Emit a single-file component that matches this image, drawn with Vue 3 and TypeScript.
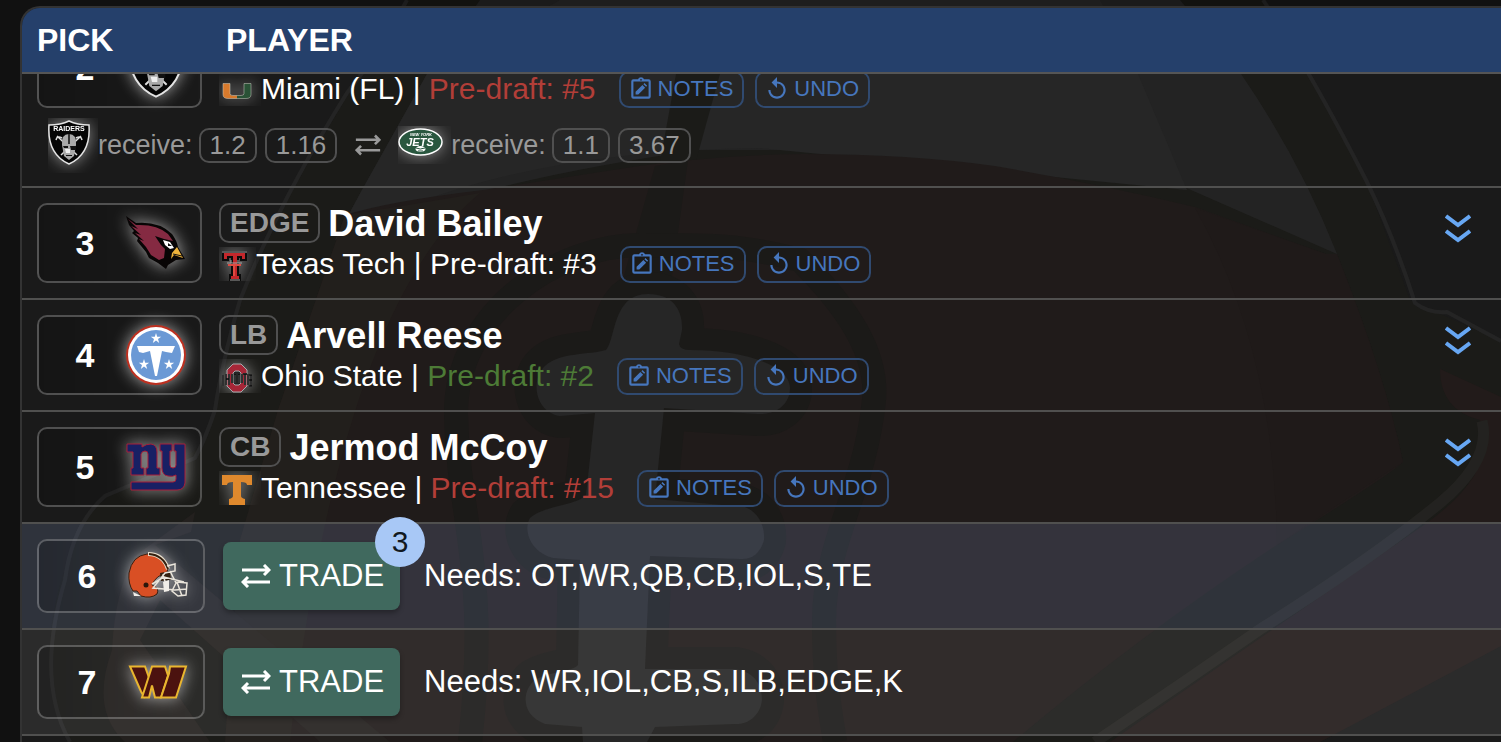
<script setup lang="ts">
import { onMounted, ref } from 'vue'

interface Label {
  text: string
  x: number
  y: number
  size: number
  fill: string
}

interface TradeSide {
  team: string
  width: number
  height: number
  gets: string[]
  labels: Label[]
}

interface Drafted {
  pick: number
  team: string
  pos: string
  name: string
  school: string
  schoolLogo: string
  logoWidth: number
  rank: number
  tone: 'even' | 'low' | 'high'
  trade?: TradeSide[]
}

interface Upcoming {
  pick: number
  team: string
  needs: string
  offers: number
  current: boolean
}

const drafted: Drafted[] = [
  {
    pick: 2, team: 'raiders', pos: '', name: '', school: 'Miami (FL)', schoolLogo: 'miami', logoWidth: 30, rank: 5, tone: 'low',
    trade: [
      { team: 'raiders', width: 42, height: 45, gets: ['1.2', '1.16'], labels: [{ text: 'RAIDERS', x: 21, y: 11, size: 7, fill: '#fff' }] },
      {
        team: 'jets', width: 45, height: 28, gets: ['1.1', '3.67'],
        labels: [
          { text: 'NEW YORK', x: 23, y: 8, size: 4, fill: '#fff' },
          { text: 'JETS', x: 22, y: 18, size: 11, fill: '#fff' },
        ],
      },
    ],
  },
  { pick: 3, team: 'cardinals', pos: 'EDGE', name: 'David Bailey', school: 'Texas Tech', schoolLogo: 'texastech', logoWidth: 25, rank: 3, tone: 'even' },
  { pick: 4, team: 'titans', pos: 'LB', name: 'Arvell Reese', school: 'Ohio State', schoolLogo: 'ohiostate', logoWidth: 30, rank: 2, tone: 'high' },
  { pick: 5, team: 'giants', pos: 'CB', name: 'Jermod McCoy', school: 'Tennessee', schoolLogo: 'tennessee', logoWidth: 30, rank: 15, tone: 'low' },
]

const upcoming: Upcoming[] = [
  { pick: 6, team: 'browns', needs: 'OT,WR,QB,CB,IOL,S,TE', offers: 3, current: true },
  { pick: 7, team: 'commanders', needs: 'WR,IOL,CB,S,ILB,EDGE,K', offers: 0, current: false },
]

const board = ref<HTMLElement | null>(null)

onMounted(() => {
  if (board.value) board.value.scrollTop = 61
})
</script>

<template>
  <main class="page">
    <svg class="defs" aria-hidden="true">
      <linearGradient id="miamiSplit"><stop offset="50%" stop-color="#d87a2c" /><stop offset="50%" stop-color="#2a5236" /></linearGradient>
      <symbol id="cardinals" viewBox="0 0 60 54">
        <path d="M0 0L10 7Q33 5 46 18Q51 25 52 31L59 43L50 44L42 49L40 53L32 47L23 42L20 36L11 25L12 22L6 17L8 15L3 9Z" fill="#080505" />
        <path d="M2 3L10 9Q31 8 42 18L47 25L38 23L29 20L35 29L39 33L38 42L33 44L25 39L20 31L13 23L18 25L9 17L15 19L5 10L12 13Z" fill="#852a42" />
        <path d="M37 24L44 26L48 32L44 33L39 29Z" fill="#fff" /><path d="M42 27L46 30L42 30Z" fill="#111" />
        <path d="M51 31L57 42L48 39L45 43L46 37Z" fill="#eeb33b" /><path d="M47 38L56 40" stroke="#111" />
      </symbol>
      <symbol id="titans" viewBox="0 0 60 60">
        <circle cx="30" cy="30" r="30" fill="#bd3020" /><circle cx="30" cy="30" r="28" fill="#fff" /><circle cx="30" cy="30" r="25" fill="#6b99d5" />
        <path d="M11 21H49L46 28L40 27L36 26L31 51H29L24 26L17 28L13 27Z" fill="#fff" />
        <path id="titanStar" d="M30 8l1.200 3.700h4l-3.200 2.400 1.200 3.900-3.200-2.400-3.200 2.400 1.200-3.900-3.200-2.400h4z" fill="#fff" />
        <use href="#titanStar" x="-12" y="26" /><use href="#titanStar" x="13" y="26" />
      </symbol>
      <symbol id="giants" viewBox="0 0 60 48">
        <g fill="#182064" stroke="#a81d38" stroke-width="1">
          <path d="M1 1H16V4Q20 1 25 1Q31 2 31 9V25H34V32H20V25H22V11Q22 8 19 8Q16 8 15 11V25H18V32H5V25H7V9H1Z" />
          <path d="M34 1H46V8H44V22Q44 25 47 25Q50 25 50 22V8H48V1H59V40Q58 47 51 47H5V39H47Q50 39 50 36V32Q47 34 42 33Q36 32 36 25V8H34Z" />
        </g>
      </symbol>
      <symbol id="browns" viewBox="0 0 60 46">
        <path d="M5 38Q0 31 1 20Q4 3 19 1Q34 0 40 14L39 20Q28 22 24 32Q32 35 29 41Q23 46 13 43L9 38Z" fill="#d94f24" stroke="#3b2010" stroke-width="1" />
        <path d="M20 1Q35 1 40 16" fill="none" stroke="#e9dfcd" stroke-width="4" />
        <path d="M21 1Q35 2 40 16" fill="none" stroke="#35200f" stroke-width="2" />
        <path d="M32 20L42 18L43 27L33 28Z" fill="#32200f" />
        <circle cx="18" cy="32" r="2.500" fill="#2b170b" />
        <path d="M39 13L47 11V18L37 20L25 35L48 37M24 31L36 24L56 29M35 21L39 36M42 18L48 30L44 38L50 43L58 42L59 30L49 29L54 43M47 37L59 36" fill="none" stroke="#e9e4da" stroke-width="1.500" />
        <path d="M35 29L41 27V38L36 39ZM5 39L13 43L6 43Z" fill="#f1eee8" />
      </symbol>
      <symbol id="commanders" viewBox="0 0 60 33">
        <g fill="#4b120f" stroke="#e9b62f" stroke-width="2">
          <path d="M2 1H17L22 15L16 31L13 26Z" /><path d="M24 1H37L40 10L33 32H27L24 20L21 32H14Z" /><path d="M42 1H58L48 32H33L41 8Z" />
        </g>
      </symbol>
      <symbol id="raiders" viewBox="0 0 42 45">
        <path d="M21 1Q29 5 41 5Q43 34 21 44Q-1 34 1 5Q13 5 21 1Z" fill="#050505" stroke="#e4e4e4" stroke-width="1.500" />
        <path d="M9 16L29 35M33 16L13 35M8 20Q9 15 14 18M34 20Q33 15 28 18" fill="none" stroke="#ddd" stroke-width="1.500" />
        <path d="M14 25Q13 14 21 14Q29 14 28 25L26 36L21 40L16 36Z" fill="#a9a9a9" />
        <path d="M21 14V24" stroke="#333" stroke-width="2" />
        <path d="M15 26H20V28H16ZM22 26H28V30H23ZM18 35H24V36H18Z" fill="#111" />
        <path d="M17 29H22V33H18Z" fill="#eee" />
      </symbol>
      <symbol id="jets" viewBox="0 0 45 28">
        <ellipse cx="22.500" cy="14" rx="21.500" ry="13" fill="#29573f" stroke="#fff" stroke-width="1.500" />
        <ellipse cx="22.500" cy="21" rx="5" ry="3" fill="#fff" /><path d="M18 20Q22 22 27 20M20 23H25" fill="none" stroke="#29573f" />
      </symbol>
      <symbol id="miami" viewBox="0 0 30 17">
        <path d="M1 1H8V11Q8 13 11 13H19Q22 13 22 11V1H29V12Q29 16 24 16H6Q1 16 1 12Z" fill="url(#miamiSplit)" stroke="#cfd0c4" stroke-width="0.500" />
      </symbol>
      <symbol id="texastech" viewBox="0 0 25 30">
        <path d="M1 1H24V9H19V6H16V24H18V29H8V24H10V6H6V9H1Z" fill="#c3272b" stroke="#0b0b0b" stroke-width="2" />
        <path d="M0 1H25M5 12H20M9 12V9M16 12V9M8 29H18" stroke="#a5a5a5" stroke-width="1" fill="none" />
        <path d="M6 14H19M12 14V25" stroke="#df4a41" stroke-width="2" />
      </symbol>
      <symbol id="ohiostate" viewBox="0 0 30 30">
        <path d="M11 1H19L25 7V23L19 29H11L5 23V7Z" fill="#a62637" stroke="#a9abae" stroke-width="1" />
        <path d="M13 8H17L19 10V20L17 22H13L11 20V10Z" fill="#242424" stroke="#a9abae" stroke-width="1" />
        <path d="M1 12V23M4 11V22M7 11V22M4 16H7M10 11V20M13 11V20M17 11V20M20 11V20M23 11V22M26 11V22M29 12V23M12 11H18M21 11H25M27 12H30M27 17H30M27 23H30" fill="none" stroke="#777" stroke-width="2" />
        <path d="M1 12V23M4 11V22M7 11V22M4 16H7M10 11V20M13 11V20M17 11V20M20 11V20M23 11V22M26 11V22M29 12V23M12 11H18M21 11H25M27 12H30M27 17H30M27 23H30" fill="none" stroke="#0b0b0b" stroke-width="1.300" />
      </symbol>
      <symbol id="tennessee" viewBox="0 0 30 30">
        <path d="M0 0H30V10H25Q25 7 19 7V21Q19 23 23 24V30H7V24Q11 23 11 21V7Q5 7 5 10H0Z" fill="#df892d" />
      </symbol>
      <symbol id="swap" viewBox="0 0 30 24">
        <path d="M1 6H28M23 1L28 6L23 11M29 18H2M7 13L2 18L7 23" fill="none" stroke="currentColor" stroke-width="3" />
      </symbol>
      <symbol id="notes" viewBox="0 0 24 24">
        <path d="M19 3h-4.200a3 3 0 0 0-5.600 0H5a2 2 0 0 0-2 2v14a2 2 0 0 0 2 2h14a2 2 0 0 0 2-2V5a2 2 0 0 0-2-2zm0 16H5V5h14zM12 2.700a.8.8 0 1 1 0 1.600.8.8 0 0 1 0-1.600z" fill="currentColor" fill-rule="evenodd" />
        <path d="M7 17v-2.500l6.300-6.200 2.500 2.500L9.500 17zM14.200 7.500l1-1 2.500 2.500-1 1z" fill="currentColor" />
      </symbol>
      <symbol id="undo" viewBox="0 0 24 24">
        <path d="M12 5V1L7 6l5 5V7c3.310 0 6 2.690 6 6s-2.690 6-6 6-6-2.690-6-6H4c0 4.420 3.580 8 8 8s8-3.580 8-8-3.580-8-8-8z" fill="currentColor" />
      </symbol>
    </svg>

    <svg class="backdrop" viewBox="0 0 1501 742" preserveAspectRatio="xMinYMin slice" aria-hidden="true">
      <path d="M407 0C365 65 275 210 240 300C228 335 219 390 210 430C200 470 110 470 80 530C48 600 35 690 70 742H1320L1501 646V341L1427 308L1410 300L1367 182Q1320 85 1263 0Z" fill="#12120f" />
      <path d="M480 0L427 74L362 190L335 240Q480 180 700 150H1100L1337 254Q1300 160 1241 74L1180 0Z" fill="#1b1b1b" />
      <path d="M560 0L427 74L362 190L335 240Q500 150 760 148L1187 190L1138 74L1100 0Z" fill="#1e1e1e" />
      <path d="M676 74H720L688 190L670 290H620L655 190Z" fill="#12120f" />
      <path d="M345 215Q390 201 483 190L600 172Q700 155 804 154Q910 154 995 166Q1100 184 1195 207L1326 254H1337Q1385 375 1403 462Q1390 475 1277 545Q1140 635 1013 742H235L238 560L278 410Z" fill="#171211" />
      <path d="M345 215Q410 205 480 193Q340 310 290 742H225L240 540L278 410Z" fill="#1a1613" />
      <path d="M688 160L670 290H620L655 166Z" fill="#12110f" />
      <path d="M1195 208L1326 254H1337Q1385 375 1403 462L1277 545Q1275 350 1195 208Z" fill="#161110" />
      <path d="M1440 369L1501 397V646L1320 742H1110L1427 523Q1500 470 1480 420Q1440 410 1440 369Z" fill="#1a1211" />
      <path d="M1482 421Q1492 460 1440 503Q1370 560 1262 628Q1180 685 1095 742" fill="none" stroke="#1b1a17" stroke-width="11" />
      <path d="M407 0Q378 54 347 93Q280 200 240 300Q222 362 215 410Q205 440 195 458L105 496Q72 525 65 580Q35 680 70 742M1263 0Q1310 70 1367 182Q1395 240 1415 303Q1430 314 1447 312L1501 341" fill="none" stroke="#1c1c1c" stroke-width="4" />
      <path d="M195 512L135 556Q115 590 112 650Q90 710 125 742H210L140 640L160 600L320 742H390L155 545L191 532Z" fill="#1b1715" />
      <path d="M640 245C560 245 455 310 456 415C458 520 490 570 470 742M640 245C720 245 740 245 800 260C850 310 878 355 874 400C865 490 825 540 824 620C824 680 830 710 835 742" fill="none" stroke="#12110f" stroke-width="24" />
      <g stroke-linejoin="round">
        <path d="M648 294C672 294 683 309 682 330L679 344Q680 350 690 350C740 350 790 364 790 388C790 405 775 415 758 414L664 408L655 499L745 507C760 513 765 528 764 540C760 555 750 560 740 559L650 556L645 669H735C755 672 762 685 762 700C760 718 745 725 735 724L655 727L647 742H583L582 727L545 724C520 715 522 690 535 680C550 671 572 672 578 665L580 560L553 558C530 552 523 530 530 518C545 505 576 506 586 495L595 413L560 416C535 412 530 380 545 366C560 352 590 355 606 350C616 340 612 294 648 294Z" fill="#12110f" stroke="#12110f" stroke-width="44" />
        <path d="M648 294C672 294 683 309 682 330L679 344Q680 350 690 350C740 350 790 364 790 388C790 405 775 415 758 414L664 408L655 499L745 507C760 513 765 528 764 540C760 555 750 560 740 559L650 556L645 669H735C755 672 762 685 762 700C760 718 745 725 735 724L655 727L647 742H583L582 727L545 724C520 715 522 690 535 680C550 671 572 672 578 665L580 560L553 558C530 552 523 530 530 518C545 505 576 506 586 495L595 413L560 416C535 412 530 380 545 366C560 352 590 355 606 350C616 340 612 294 648 294Z" fill="#1e1e1e" />
      </g>
    </svg>

    <section ref="board" class="board">
      <table class="picks">
        <thead>
          <tr><th class="pick-col">PICK</th><th colspan="2" class="player-head">PLAYER</th></tr>
        </thead>
        <tbody>
          <template v-for="row in drafted" :key="row.pick">
            <tr :class="{ joined: row.trade }">
              <td class="pick-col">
                <div class="pick-box">
                  <span class="number">{{ row.pick }}</span>
                  <svg class="team"><use :href="'#' + row.team" /></svg>
                </div>
              </td>
              <td>
                <div class="player">
                  <div class="title">
                    <span v-if="row.pos" class="pos">{{ row.pos }}</span>
                    <span class="name">{{ row.name }}</span>
                  </div>
                  <div class="detail">
                    <span class="school-logo"><svg :width="row.logoWidth" height="30"><use :href="'#' + row.schoolLogo" /></svg></span>
                    <span>{{ row.school }} | <span :class="row.tone">Pre-draft: #{{ row.rank }}</span></span>
                    <span class="actions">
                      <button type="button" class="small"><svg><use href="#notes" /></svg>NOTES</button>
                      <button type="button" class="small"><svg><use href="#undo" /></svg>UNDO</button>
                    </span>
                  </div>
                </div>
              </td>
              <td class="more-col">
                <button v-if="row.name" type="button" class="more" :aria-label="row.name">
                  <svg viewBox="0 0 26 30"><path d="M1 2L13 11L25 2M1 17L13 26L25 17" fill="none" stroke="currentColor" stroke-width="4" /></svg>
                </button>
              </td>
            </tr>
            <tr v-if="row.trade">
              <td colspan="3">
                <div class="swap-line">
                  <template v-for="(side, i) in row.trade" :key="side.team">
                    <svg v-if="i > 0" class="swap"><use href="#swap" /></svg>
                    <span class="side">
                      <span class="side-logo">
                        <svg :width="side.width" :height="side.height">
                          <use :href="'#' + side.team" />
                          <text v-for="l in side.labels" :key="l.text" :class="side.team" :x="l.x" :y="l.y" :font-size="l.size" :fill="l.fill" text-anchor="middle" font-weight="700">{{ l.text }}</text>
                        </svg>
                      </span>
                      <span>receive:</span>
                      <span class="chips"><span v-for="g in side.gets" :key="g" class="chip">{{ g }}</span></span>
                    </span>
                  </template>
                </div>
              </td>
            </tr>
          </template>
          <tr v-for="row in upcoming" :key="row.pick" :class="row.current ? 'current' : 'next'">
            <td class="pick-col">
              <div class="pick-box wide">
                <span class="number">{{ row.pick }}</span>
                <svg class="team"><use :href="'#' + row.team" /></svg>
              </div>
            </td>
            <td colspan="2">
              <div class="upcoming">
                <button type="button" class="trade">
                  <svg><use href="#swap" /></svg>TRADE
                  <span v-if="row.offers" class="offers">{{ row.offers }}</span>
                </button>
                <span>Needs: {{ row.needs }}</span>
              </div>
            </td>
          </tr>
          <tr class="rest"><td colspan="3"></td></tr>
        </tbody>
      </table>
    </section>
  </main>
</template>

<style>
body {
  margin: 0;
  background: #111;
}
</style>

<style scoped>
.page {
  position: relative;
  box-sizing: border-box;
  height: 100vh;
  padding: 6px 0 0 20px;
  overflow: hidden;
  background: #111;
  color: #fff;
  font-family: "Liberation Sans", Arial, sans-serif;
}
.defs {
  position: absolute;
  width: 0;
  height: 0;
}
.backdrop {
  position: absolute;
  inset: 0;
  width: 100%;
  height: 100%;
}
.board {
  position: relative;
  box-sizing: border-box;
  height: 100%;
  overflow: auto;
  scrollbar-width: none;
  border: solid #333;
  border-width: 2px 0 0 2px;
  border-top-left-radius: 20px;
  background: rgba(255, 255, 255, 0.04);
}
.picks {
  width: 100%;
  border-spacing: 0;
}
th {
  position: sticky;
  top: 0;
  z-index: 2;
  box-sizing: border-box;
  height: 66px;
  padding: 0;
  border-bottom: 2px solid #555;
  background: #25406b;
  font-size: 32px;
  text-align: left;
}
td {
  padding: 15px 0;
  border-bottom: 2px solid #50504f;
  vertical-align: middle;
}
.pick-col {
  width: 182px;
  padding-left: 15px;
}
th.player-head {
  padding-left: 7px;
}
.joined td {
  padding-bottom: 0;
  border-bottom: 0;
}
.pick-box {
  display: flex;
  box-sizing: border-box;
  align-items: center;
  width: 165px;
  height: 80px;
  padding-left: 5px;
  border: 2px solid rgba(255, 255, 255, 0.25);
  border-radius: 10px;
  background: linear-gradient(90deg, rgba(0, 0, 0, 0.2), rgba(0, 0, 0, 0));
}
.pick-box.wide {
  width: 168px;
  height: 74px;
  padding-left: 7px;
}
.number {
  width: 82px;
  font-size: 34px;
  font-weight: 700;
  text-align: center;
}
.team {
  width: 60px;
  height: 60px;
  filter: drop-shadow(0 0 8px rgba(255, 255, 255, 0.6));
}
.player {
  height: 80px;
}
.title {
  display: flex;
  align-items: center;
  gap: 8px;
  height: 40px;
}
.pos {
  box-sizing: border-box;
  height: 40px;
  padding: 0 9px;
  border: 2px solid #505050;
  border-radius: 10px;
  color: #999;
  font-size: 28px;
  font-weight: 700;
  line-height: 36px;
}
.name {
  padding-top: 2px;
  font-size: 36px;
  font-weight: 700;
}
.detail {
  display: flex;
  align-items: center;
  height: 40px;
  padding-top: 2px;
  box-sizing: border-box;
  font-size: 30px;
  white-space: nowrap;
}
.school-logo {
  display: flex;
  box-sizing: border-box;
  align-items: flex-end;
  height: 34px;
  padding: 0 9px 0 3px;
  overflow: hidden;
}
.school-logo svg,
.side-logo svg {
  filter: drop-shadow(0 0 8px rgba(255, 255, 255, 0.5));
}
.low {
  color: #b23e38;
}
.high {
  color: #4d7b36;
}
.actions {
  display: flex;
  gap: 11px;
  margin-left: 23px;
}
button {
  margin: 0;
  font-family: inherit;
  cursor: pointer;
}
.small {
  display: flex;
  align-items: center;
  gap: 4px;
  height: 37px;
  padding: 0 9px 0 7px;
  border: 2px solid #304a70;
  border-radius: 10px;
  background: transparent;
  color: #4676bd;
  font-size: 22px;
}
.small svg {
  width: 26px;
  height: 26px;
}
td.more-col {
  padding-right: 30px;
  text-align: right;
  vertical-align: top;
}
.more {
  margin-top: 11px;
  padding: 0;
  border: 0;
  background: transparent;
  color: #67a7f3;
}
.more svg {
  display: block;
  width: 26px;
  height: 30px;
}
.swap-line {
  display: flex;
  align-items: center;
  height: 54px;
  margin: -5px 0 -1px;
  padding-left: 26px;
  color: #999;
  font-size: 27px;
}
.side {
  display: flex;
  align-items: center;
}
.side-logo {
  display: flex;
  align-items: center;
  padding: 2px 8px 8px 0;
  overflow: hidden;
}
.jets {
  font-style: italic;
}
.chips {
  display: flex;
  gap: 8px;
  margin-left: 6px;
}
.chip {
  padding: 0 9px;
  border: 2px solid #505050;
  border-radius: 10px;
  font-size: 26px;
  line-height: 31px;
}
.swap {
  width: 26px;
  height: 22px;
  margin: 0 17px 0 18px;
}
.current td {
  background: rgba(166, 193, 253, 0.15);
}
.next td {
  background: rgba(255, 255, 255, 0.08);
}
.upcoming {
  display: flex;
  align-items: center;
  gap: 24px;
  padding-left: 4px;
  font-size: 31px;
}
.trade {
  position: relative;
  display: flex;
  align-items: center;
  gap: 8px;
  height: 68px;
  padding: 0 16px 0 18px;
  border: 0;
  border-radius: 8px;
  background: #40695e;
  box-shadow: 0 3px 5px rgba(0, 0, 0, 0.3);
  color: #fff;
  font-size: 31px;
}
.trade svg {
  width: 30px;
  height: 24px;
}
.offers {
  position: absolute;
  top: -25px;
  right: -25px;
  z-index: 1;
  width: 50px;
  height: 50px;
  border-radius: 50%;
  background: #a8c8f6;
  color: #111820;
  font-size: 30px;
  line-height: 50px;
  text-align: center;
}
.rest td {
  height: 200px;
}
</style>
